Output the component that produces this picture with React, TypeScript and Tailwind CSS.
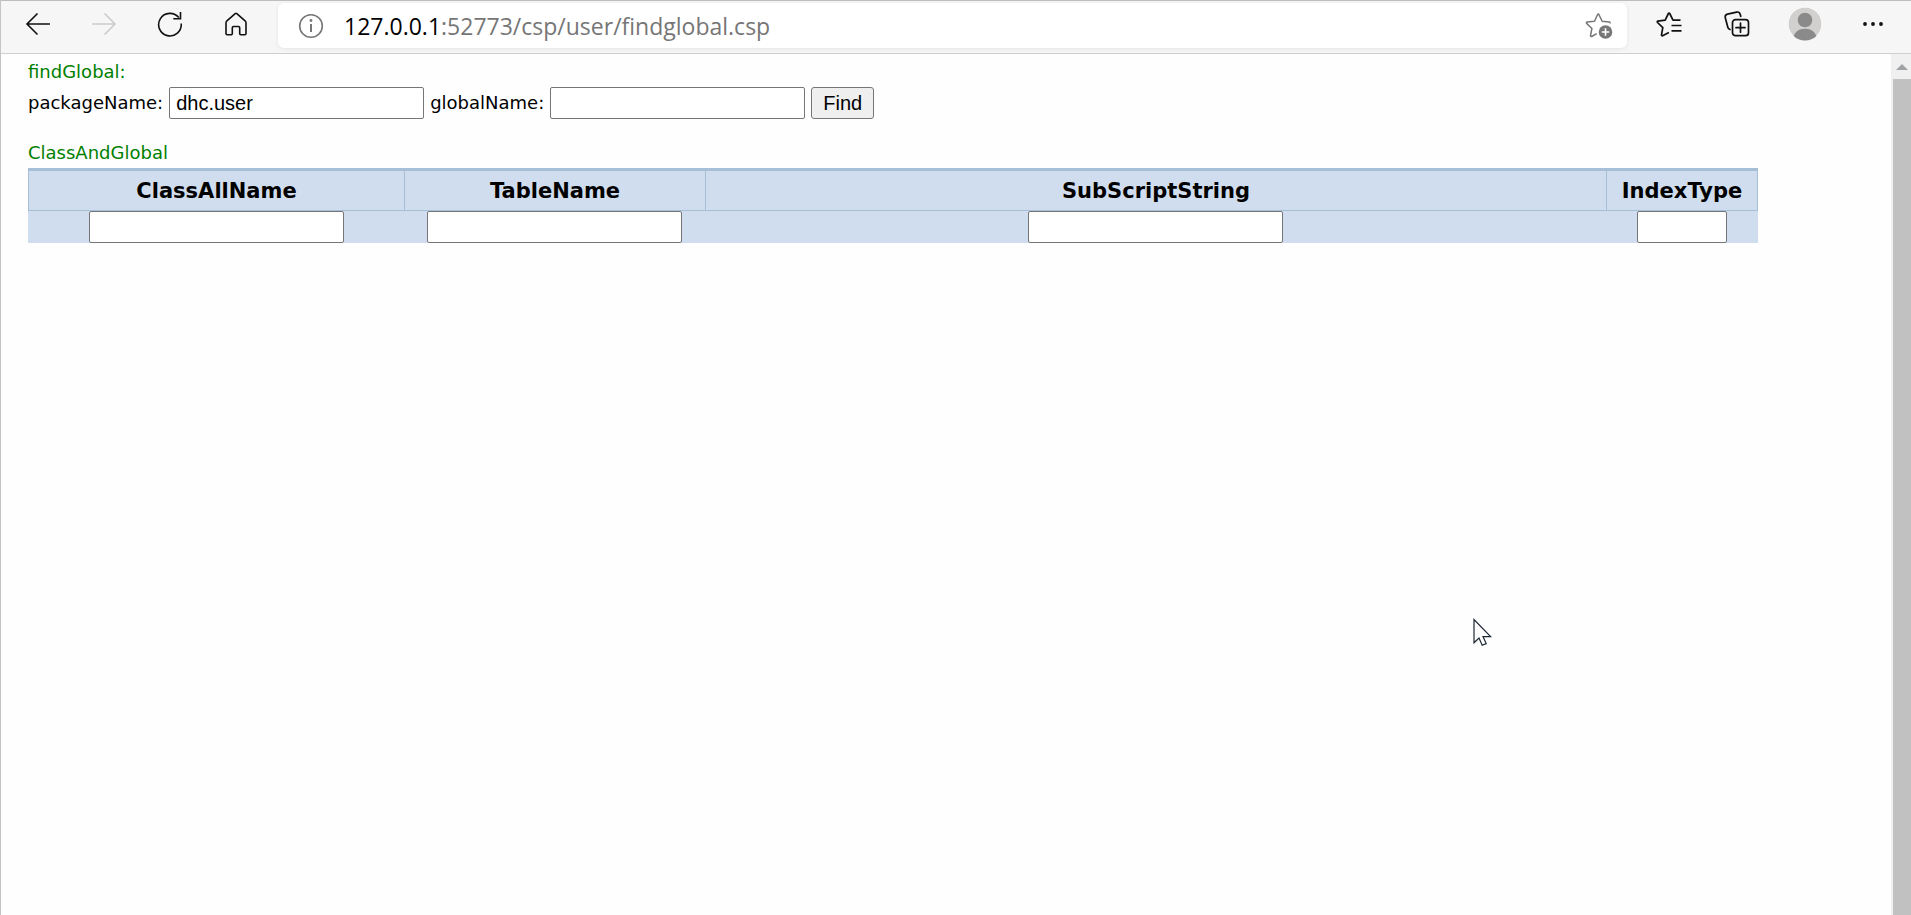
import type { ReactNode } from "react";

const fieldClass =
  "h-8 rounded-[2px] border border-[#767676] bg-white px-1.5 font-['Liberation_Sans',Arial,sans-serif] text-[20px] leading-6 text-black";

const columns = [
  { name: "ClassAllName", col: "w-[376px]", input: "w-[255px]" },
  { name: "TableName", col: "w-[301px]", input: "w-[255px]" },
  { name: "SubScriptString", col: "", input: "w-[255px]" },
  { name: "IndexType", col: "w-[152px]", input: "w-[90px]" },
];

function ToolButton({ label, disabled, children }: { label: string; disabled?: boolean; children: ReactNode }) {
  return (
    <button
      type="button"
      aria-label={label}
      disabled={disabled}
      className="flex size-9 shrink-0 items-center justify-center text-[#111111] disabled:text-[#cccccc]"
    >
      {children}
    </button>
  );
}

function BrowserBar() {
  return (
    <header className="flex h-[54px] items-center border-t border-b border-t-[#bdbdbd] border-b-[#cfcfcf] bg-[#f6f6f6] pb-[6px] pl-[19px] pr-5">
      <nav className="flex gap-[30px]" aria-label="Navigation">
        <ToolButton label="Back">
          <svg width="26" height="24" viewBox="0 0 26 24" fill="none" stroke="currentColor" strokeWidth="1.600">
            <path d="M25 12H2M12.500 1.500 2 12l10.500 10.500" />
          </svg>
        </ToolButton>
        <ToolButton label="Forward" disabled>
          <svg width="26" height="24" viewBox="0 0 26 24" fill="none" stroke="currentColor" strokeWidth="1.600">
            <path d="M1 12h23M13.500 1.500 24 12 13.500 22.500" />
          </svg>
        </ToolButton>
        <ToolButton label="Refresh">
          <svg width="26" height="26" viewBox="0 0 26 26" fill="none" stroke="currentColor" strokeWidth="1.600">
            <path d="M24.200 12.500A11.300 11.300 0 1 1 21.800 6.600M23.500 1v6.800h-7.200" />
          </svg>
        </ToolButton>
        <ToolButton label="Home">
          <svg width="24" height="26" viewBox="0 0 24 26" fill="none" stroke="currentColor" strokeWidth="1.600" strokeLinejoin="round">
            <path d="M2 11.800c0-.8.3-1.500.9-2L11.200 2.600a1.200 1.200 0 0 1 1.600 0l8.300 7.200c.6.5.9 1.200.9 2V22.500a1.200 1.200 0 0 1-1.200 1.200h-3.900a1.200 1.200 0 0 1-1.200-1.200v-5.800a1.200 1.200 0 0 0-1.200-1.200h-5a1.200 1.200 0 0 0-1.200 1.200v5.800a1.200 1.200 0 0 1-1.200 1.200H3.200A1.200 1.200 0 0 1 2 22.500Z" />
          </svg>
        </ToolButton>
      </nav>

      <div className="ml-6 mt-[3px] flex h-[45px] min-w-0 flex-1 items-center rounded-md bg-white pl-5 pr-3.5 shadow-[0_1px_4px_rgba(0,0,0,0.07)]">
        <button type="button" aria-label="Site information" className="shrink-0 text-[#767676]">
          <svg width="26" height="26" viewBox="0 0 26 26" fill="none" stroke="currentColor" strokeWidth="1.600">
            <circle cx="13" cy="13" r="11.300" />
            <path d="M13 11v8" strokeWidth="2" />
            <circle cx="13" cy="7.500" r="1.400" fill="currentColor" stroke="none" />
          </svg>
        </button>
        <p className="ml-5 min-w-0 flex-1 truncate font-['Open_Sans','Noto_Sans',sans-serif] text-[23px] leading-8 text-[#767676]">
          <span className="text-black">127.0.0.1</span>:52773/csp/user/findglobal.csp
        </p>
        <button type="button" aria-label="Add to favorites" className="shrink-0 text-[#767676]">
          <svg width="28" height="28" viewBox="0 0 28 28" fill="none" stroke="currentColor" strokeWidth="1.500" strokeLinejoin="round">
            <path d="M24.800 11.400c.5-.4.3-1.200-.4-1.300l-7.300-.9-3.200-6.700c-.3-.6-1-.6-1.300 0L9.500 9.200l-7.400.9c-.7.100-.9.800-.5 1.300l5.300 5.100-1.400 7.200c-.1.700.5 1.100 1.100.8l5.200-2.800" />
            <circle cx="20.500" cy="20" r="6.800" fill="currentColor" stroke="none" />
            <path d="M20.500 16.200v7.600M16.700 20h7.600" stroke="white" strokeWidth="1.700" />
          </svg>
        </button>
      </div>

      <div className="ml-6 flex items-center gap-8">
        <ToolButton label="Favorites">
          <svg width="26" height="26" viewBox="0 0 26 26" fill="none" stroke="currentColor" strokeWidth="1.700" strokeLinejoin="round">
            <path d="M24.500 9.200H17l-3.300-6.700c-.3-.6-1-.6-1.300 0L9.200 9.200l-7.300 1c-.7.100-.9.800-.4 1.300l5.300 5.200-1.300 7.200c-.1.700.5 1.100 1.100.8l6.300-3.300M15.500 14.500h10M15.500 19.800h10" />
          </svg>
        </ToolButton>
        <ToolButton label="Collections">
          <svg width="26" height="26" viewBox="0 0 26 26" fill="none" stroke="currentColor" strokeWidth="1.700" strokeLinecap="round">
            <path d="M6 18.500a3 3 0 0 1-2.200-2.200L1.300 6.800A3 3 0 0 1 3.500 3.200l9.200-2.100a3 3 0 0 1 3.500 2.200l.5 2" />
            <rect x="8.500" y="8.700" width="16" height="16" rx="3" />
            <path d="M16.500 12.200v9M12 16.700h9" />
          </svg>
        </ToolButton>
        <ToolButton label="Profile">
          <svg width="34" height="34" viewBox="0 0 34 34" className="shrink-0">
            <clipPath id="avatar-edge">
              <circle cx="17" cy="17" r="16.500" />
            </clipPath>
            <g clipPath="url(#avatar-edge)">
              <circle cx="17" cy="17" r="16.500" fill="#d1d0cf" />
              <circle cx="17" cy="13" r="7.300" fill="#8a8a8a" />
              <path d="M5 34c0-8 4.500-12.300 12-12.300S29 26 29 34Z" fill="#8a8a8a" />
            </g>
          </svg>
        </ToolButton>
        <ToolButton label="Settings and more">
          <svg width="20" height="4" viewBox="0 0 20 4" fill="currentColor">
            <circle cx="2" cy="2" r="1.900" />
            <circle cx="10" cy="2" r="1.900" />
            <circle cx="18" cy="2" r="1.900" />
          </svg>
        </ToolButton>
      </div>
    </header>
  );
}

export default function App() {
  return (
    <div className="relative flex min-h-screen flex-col border-l border-[#c4c4c4] bg-[#fefefe]">
      <BrowserBar />
      <div className="flex flex-1">
        <main className="min-w-0 flex-1 pl-[27px] pr-[133px] pt-1.5 font-['DejaVu_Sans',Verdana,sans-serif] text-[18px] leading-6 text-black">
          <form>
            <p className="text-[#008000]">findGlobal:</p>
            <div className="mt-[3px] flex items-center">
              <label htmlFor="packageName">packageName:</label>
              <input id="packageName" defaultValue="dhc.user" className={`ml-1.5 w-[255px] ${fieldClass}`} />
              <label htmlFor="globalName" className="ml-1.5">
                globalName:
              </label>
              <input id="globalName" className={`ml-1.5 w-[255px] ${fieldClass}`} />
              <button
                type="button"
                className="ml-1.5 h-8 w-[63px] rounded-[3px] border border-[#767676] bg-[#efefef] font-['Liberation_Sans',Arial,sans-serif] text-[20px] leading-6"
              >
                Find
              </button>
            </div>
          </form>
          <table className="mt-[22px] w-full table-fixed border-separate border-spacing-0">
            <caption className="pb-[3px] text-left text-[#008000]">ClassAndGlobal</caption>
            <colgroup>
              {columns.map((c) => (
                <col key={c.name} className={c.col} />
              ))}
            </colgroup>
            <thead>
              <tr className="bg-[#d0ddee]">
                {columns.map((c) => (
                  <th
                    key={c.name}
                    scope="col"
                    className="h-[43px] border-t-[3px] border-b border-l border-[#a6bfd6] p-0 text-center text-[21px] leading-6 font-bold last:border-r"
                  >
                    {c.name}
                  </th>
                ))}
              </tr>
            </thead>
            <tbody>
              <tr className="bg-[#d0ddee]">
                {columns.map((c) => (
                  <td key={c.name} className="p-0 text-center">
                    <input aria-label={c.name} className={`block mx-auto ${c.input} ${fieldClass}`} />
                  </td>
                ))}
              </tr>
            </tbody>
          </table>
        </main>
        <div className="flex w-5 flex-col items-end bg-[#f0f0f0]" aria-hidden="true">
          <div className="flex h-[25px] w-[18px] items-center justify-center">
            <svg width="12" height="6" viewBox="0 0 12 6" fill="#a0a3a6">
              <path d="M6 0l6 6H0Z" />
            </svg>
          </div>
          <div className="w-[18px] flex-1 bg-[#c1c1c1]" />
        </div>
      </div>
      <svg
        className="pointer-events-none absolute left-[1472px] top-[618px]"
        width="20"
        height="30"
        viewBox="0 0 20 30"
        fill="white"
        stroke="#1c2733"
        strokeWidth="1.200"
        aria-hidden="true"
      >
        <path d="M1 1.500v23.300l5-4.800 3.200 7.300 4-1.700-3.200-7h7.600Z" />
      </svg>
    </div>
  );
}
